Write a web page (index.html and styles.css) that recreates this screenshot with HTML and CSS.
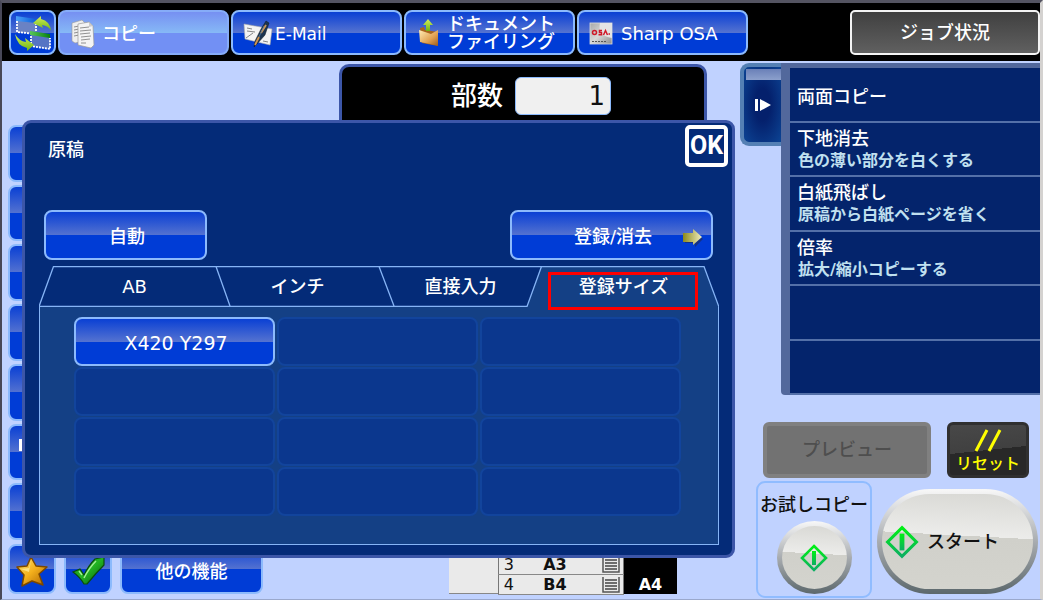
FILE: index.html
```html
<!DOCTYPE html>
<html lang="ja">
<head>
<meta charset="utf-8">
<title>コピー</title>
<link rel="stylesheet" href="styles.css">
</head>
<body>
<svg class="defs" aria-hidden="true">
  <defs>
    <linearGradient id="gold" x1="0" y1="0" x2="1" y2="1"><stop offset="0" stop-color="#ffe878"/><stop offset=".5" stop-color="#f4b01c"/><stop offset="1" stop-color="#a86000"/></linearGradient>
    <linearGradient id="green" x1="0" y1="0" x2="1" y2="1"><stop offset="0" stop-color="#1d8a1c"/><stop offset=".5" stop-color="#22b422"/><stop offset="1" stop-color="#0a5c0e"/></linearGradient>
    <linearGradient id="lime" x1="0" y1="0" x2="0" y2="1"><stop offset="0" stop-color="#d4f05a"/><stop offset="1" stop-color="#6cb414"/></linearGradient>
    <linearGradient id="folder" x1="0" y1="0" x2="1" y2="1"><stop offset="0" stop-color="#ffeeb8"/><stop offset=".6" stop-color="#e0a050"/><stop offset="1" stop-color="#9a5a1c"/></linearGradient>
    <linearGradient id="olive" x1="0" y1="0" x2="1" y2="0"><stop offset="0" stop-color="#8c8a1c"/><stop offset="1" stop-color="#f0eec0"/></linearGradient>
    <linearGradient id="silver" x1="0" y1="0" x2="1" y2="1"><stop offset="0" stop-color="#a8a8a8"/><stop offset=".5" stop-color="#d8d8d8"/><stop offset="1" stop-color="#8c8c8c"/></linearGradient>
    <linearGradient id="start" x1="0" y1="0" x2="0" y2="1"><stop offset="0" stop-color="#00f014"/><stop offset="1" stop-color="#0cae62"/></linearGradient>
    <linearGradient id="winblue" x1="0" y1="0" x2="1" y2="0"><stop offset="0" stop-color="#4aa0f8"/><stop offset="1" stop-color="#0c5cd8"/></linearGradient>
    <linearGradient id="wingreen" x1="0" y1="0" x2="1" y2="0"><stop offset="0" stop-color="#58c858"/><stop offset="1" stop-color="#088010"/></linearGradient>
  </defs>
</svg>
<div class="screen">
  <header class="modes">
    <button class="btn mode-switch" aria-label="切替">
      <svg width="38" height="38" viewBox="0 0 38 38">
        <path d="M3 3L22 6V20L3 18Z" fill="#6a82c4"/><path d="M2 2L22 5V9L2 7Z" fill="url(#winblue)"/>
        <path d="M3 7V18L22 20V9" fill="none" stroke="#fff" stroke-width="1.800" stroke-dasharray="2 1"/>
        <path d="M17 20L36 22V35L17 32Z" fill="#5674c4"/><path d="M16 17L36 20V24L16 21Z" fill="url(#wingreen)"/>
        <path d="M17 22V32L36 35V24" fill="none" stroke="#fff" stroke-width="1.800" stroke-dasharray="2 1"/>
        <path d="M37 17Q35 12 28 11L29 14L19 9L27 2V5Q36 7 37 17Z" fill="url(#lime)"/>
        <path d="M1 20Q5 27 12 28L11 24L20 31L13 37V34Q3 32 1 20Z" fill="url(#lime)"/>
      </svg>
    </button>
    <button class="btn mode mode-on">
      <svg width="26" height="30" viewBox="0 0 26 30">
        <path d="M2 4L12 1L15 4V22L5 24L2 22Z" fill="#eee" stroke="#999" stroke-width=".6"/>
        <path d="M4 8L9 7M4 11L9 10M4 14L9 13M4 17L9 16" stroke="#777" stroke-width=".8"/>
        <path d="M8 5L19 3L23 7L24 26L21 29L8 26Z" fill="#f4f4f4" stroke="#999" stroke-width=".7"/>
        <path d="M10 9L19 8M10 12L21 11M10 15L20 14M11 18L21 17M11 21L20 20M11 24L16 24" stroke="#777" stroke-width=".8"/>
        <path d="M19 3V8L23 7Z" fill="#ccc"/>
      </svg>
      <span>コピー</span>
    </button>
    <button class="btn mode mail">
      <svg width="30" height="28" viewBox="0 0 30 28">
        <path d="M1 4L29 9L27 25L2 19Z" fill="#f4f4f4" stroke="#aaa" stroke-width=".6"/>
        <path d="M4 8L9 9M4 11L12 12M3 18L10 13M20 21L25 22" stroke="#777" stroke-width=".9"/>
        <path d="M23 1L26 3L22 15L14 24L11 27L12 21L18 9Z" fill="#1c3450" stroke="#101820" stroke-width=".5"/>
        <path d="M23 5L18 13M16 17L12 25" stroke="#d09450" stroke-width="1.800"/>
        <path d="M21 6L16 17" stroke="#5c84a8" stroke-width=".8"/>
      </svg>
      <span>E-Mail</span>
    </button>
    <button class="btn mode filing">
      <svg width="24" height="28" viewBox="0 0 24 28">
        <path d="M3 9L7 8L8 11L21 13V27L5 24Z" fill="#a8641c"/>
        <path d="M11 0L16 6H13V12H9V6H6Z" fill="url(#lime)"/>
        <path d="M2 11L14 15L21 11V27L18 26L3 23Z" fill="url(#folder)"/>
      </svg>
      <span>ドキュメント<br>ファイリング</span>
    </button>
    <button class="btn mode osa">
      <svg width="24" height="24" viewBox="0 0 24 24">
        <rect x="1" y="1" width="22" height="21" fill="url(#silver)" stroke="#ddd" stroke-width=".8"/>
        <path d="M11 1H23V16Q8 14 11 1Z" fill="#e4e4e4"/>
        <g fill="none" stroke="#d01828" stroke-width="1.500"><circle cx="5.500" cy="10.500" r="2"/><path d="M13 8.500H10.500V10.500H12.500V12.800H9.500M14.500 13L16.500 8.500L18.500 13M19.500 12H21"/></g>
        <path d="M3 19.500H18" stroke="#555" stroke-width="1.200" stroke-dasharray="2 1"/>
      </svg>
      <span>Sharp OSA</span>
    </button>
    <button class="job-status">ジョブ状況</button>
  </header>

  <main class="work">
    <section class="left">
      <div class="copies">
        <label for="copies">部数</label>
        <input id="copies" type="text" value="1">
      </div>
      <div class="side" aria-hidden="true">
        <div></div><div></div><div></div><div></div><div></div><div><i></i></div><div></div>
      </div>
      <div class="bottom">
        <button class="btn tool" aria-label="お気に入り">
          <svg width="34" height="32" viewBox="0 0 34 32"><path d="M16 2L21 11L32 12L24 19L28 30L17 26L7 31L9 20L2 12L12 11Z" fill="url(#gold)" stroke="#7c4800" stroke-width="1.500" stroke-linejoin="round"/><path d="M16 5L14 13L6 14L14 17Z" fill="#fff0a0" opacity=".7"/></svg>
        </button>
        <button class="btn tool" aria-label="確認">
          <svg width="34" height="32" viewBox="0 0 34 32"><path d="M2 17L9 14L13 20Q18 10 24 4L33 2V10Q25 18 16 29H13Q9 22 2 17Z" fill="url(#green)" stroke="#0a4c0c" stroke-width="1.200"/><path d="M13 23Q18 13 25 6M8 16L11 20" stroke="#a0f090" stroke-width="1.500" fill="none"/></svg>
        </button>
        <button class="btn other">他の機能</button>
        <div class="trays">
          <div class="tray-blank"></div>
          <table>
            <tr><td class="no">3</td><td class="size">A3</td><td class="stack"><svg width="18" height="16" viewBox="0 0 18 16"><path d="M1 0V15H17V0" fill="none" stroke="#555" stroke-width="1.500"/><path d="M3 3H15M3 6H15M3 9H15M3 12H15" stroke="#444" stroke-width="1.400"/></svg></td></tr>
            <tr><td class="no">4</td><td class="size">B4</td><td class="stack"><svg width="18" height="16" viewBox="0 0 18 16"><path d="M1 0V15H17V0" fill="none" stroke="#555" stroke-width="1.500"/><path d="M3 3H15M3 6H15M3 9H15M3 12H15" stroke="#444" stroke-width="1.400"/></svg></td></tr>
          </table>
          <div class="tray-a4">A4</div>
        </div>
      </div>

      <div class="dialog" role="dialog" aria-labelledby="dialog-title">
        <div class="dialog-head">
          <h1 id="dialog-title">原稿</h1>
          <button class="ok">OK</button>
        </div>
        <div class="dialog-actions">
          <button class="btn auto">自動</button>
          <button class="btn register">登録/消去
            <svg class="arrow" width="22" height="20" viewBox="0 0 22 20"><path d="M3 7H12V3L21 11L13 19V15H3Z" fill="#222850" opacity=".6"/><path d="M1 5H11V1L20 9L11 17V14H1Z" fill="url(#olive)"/></svg>
          </button>
        </div>
        <div class="tabs" role="tablist">
          <svg class="tab-lines" viewBox="0 0 680 41" preserveAspectRatio="none" aria-hidden="true">
            <path d="M488 41L502 .5H665L680 41Z" fill="#144085"/>
            <path d="M0 40.500L14.500 .5H665L680 41M177 .5L191 40M340 .5L355 40M502.500 .5L488 40.500H0" fill="none" stroke="#86b4f6" stroke-width="1.300"/>
          </svg>
          <button role="tab">AB</button>
          <button role="tab">インチ</button>
          <button role="tab">直接入力</button>
          <button role="tab" class="tab-on" aria-selected="true">登録サイズ<span class="mark"></span></button>
        </div>
        <div class="sizes">
          <button class="btn">X420 Y297</button>
          <button disabled></button><button disabled></button><button disabled></button>
          <button disabled></button><button disabled></button><button disabled></button>
          <button disabled></button><button disabled></button><button disabled></button>
          <button disabled></button><button disabled></button>
        </div>
      </div>
    </section>

    <aside class="right">
      <div class="action-panel">
        <button class="handle" aria-label="開閉"><svg width="18" height="14" viewBox="0 0 18 14"><path d="M1 1H4V13H1ZM6 1L17 7L6 13Z" fill="#fff"/></svg></button>
        <ul class="actions">
          <li class="current"><b>両面コピー</b></li>
          <li><b>下地消去</b><span>色の薄い部分を白くする</span></li>
          <li><b>白紙飛ばし</b><span>原稿から白紙ページを省く</span></li>
          <li><b>倍率</b><span>拡大/縮小コピーする</span></li>
          <li></li>
          <li></li>
        </ul>
      </div>
      <div class="row-a">
        <button class="preview" disabled>プレビュー</button>
        <button class="reset">
          <svg width="34" height="27" viewBox="0 0 34 27"><path d="M5 24L16 3M18 24L29 3" stroke="#ff0" stroke-width="3"/></svg>
          <span>リセット</span>
        </button>
      </div>
      <div class="row-b">
        <div class="trial">
          <span id="trial-label">お試しコピー</span>
          <button class="round" aria-labelledby="trial-label"><svg width="28" height="30" viewBox="0 0 28 30"><path d="M14 3L26 15L14 27L2 15Z" fill="none" stroke="url(#start)" stroke-width="2.600"/><path d="M12 8H16V22H12Z" fill="url(#start)"/></svg></button>
        </div>
        <button class="start">
          <svg width="34" height="36" viewBox="0 0 28 30"><path d="M14 3L26 15L14 27L2 15Z" fill="none" stroke="url(#start)" stroke-width="2.600"/><path d="M12 8H16V22H12Z" fill="url(#start)"/></svg>
          <span>スタート</span>
        </button>
      </div>
    </aside>
  </main>
</div>
</body>
</html>
```

FILE: styles.css
```css
* { box-sizing: border-box; }
body {
  margin: 0;
  font: 500 18px/20px "DejaVu Sans", "Noto Sans CJK JP", sans-serif;
  color: #fff;
  background: #c0d2ff;
}
button, input { font: inherit; color: inherit; margin: 0; padding: 0; }
svg { display: block; flex: none; }
.defs { position: absolute; width: 0; height: 0; }

.screen {
  display: flex;
  flex-direction: column;
  min-height: 100vh;
  border-top: 3px solid #545462;
  border-left: 2px solid #484858;
  border-right: 3px solid #d4d2d0;
  border-bottom: 1px solid #9aa8cc;
}

.btn {
  border: 2px solid #8cbafc;
  border-radius: 8px;
  background: linear-gradient(#0a40d4, #5472d0 50%, #003cd6 50%);
}

/* Mode keys */
.modes {
  display: flex;
  gap: 2px;
  padding: 7px 0 6px 7px;
  background: #000;
}
.mode-switch { width: 47px; height: 45px; display: grid; place-items: center; }
.mode {
  display: flex;
  align-items: center;
  gap: 6px;
  width: 171px;
  height: 45px;
  padding: 2px 0 0 10px;
  line-height: 18px;
  text-align: left;
}
.mode-on {
  border-color: #86acf8;
  background: linear-gradient(#7690f2, #86b8f6 50%, #7290f4 50%);
}
.mail { gap: 2px; font-size: 17px; }
.filing { padding: 0 0 0 11px; }
.osa { gap: 8px; }
.job-status {
  width: 190px;
  margin-left: auto;
  border: 2px solid #f4f4f4;
  border-radius: 5px;
  background: linear-gradient(#404040, #606060);
}

.work { display: flex; flex: 1; }
.left {
  position: relative;
  display: flex;
  flex-direction: column;
  flex: 1;
}

.copies {
  display: flex;
  justify-content: center;
  align-items: center;
  gap: 12px;
  height: 60px;
  margin: 3px 33px 0 337px;
  border: 3px solid #3c56a8;
  border-bottom: 0;
  border-radius: 10px 10px 0 0;
  background: #000;
  font-size: 26px;
}
.copies label { padding-left: 16px; }
.copies input {
  width: 96px;
  height: 38px;
  padding-right: 5px;
  border: 1px solid #8cbafc;
  border-radius: 6px;
  background: #f0f0f0;
  color: #111;
  text-align: right;
}

.side {
  display: grid;
  grid-auto-rows: 1fr;
  gap: 3px;
  flex: 1;
  width: 40px;
  margin: 1px 0 4px 6px;
}
.side div {
  border: 2px solid #8cbafc;
  border-radius: 8px;
  background: linear-gradient(#0a40d4, #5472d0 50%, #003cd6 50%);
}
.side i { display: block; width: 4px; height: 12px; margin: 13px 0 0 9px; background: #fff; }

.bottom {
  display: flex;
  gap: 8px;
  align-items: flex-end;
  padding: 0 63px 5px 6px;
}
.tool { display: grid; place-items: center; width: 48px; height: 50px; }
.tool svg { margin-top: 4px; }
.other { width: 143px; height: 50px; padding-top: 6px; }
.trays { display: flex; width: 228px; height: 40px; margin-left: auto; color: #111; background: #eaeaea; }
.tray-blank { flex: 1; border-bottom: 1px solid #888; }
.trays table {
  width: 126px;
  table-layout: fixed;
  border-collapse: collapse;
  border: 1px solid #777;
  font-size: 16px;
}
.trays td { height: 20px; padding: 0; border-bottom: 1px solid #888; line-height: 18px; text-align: center; }
.trays .no { width: 20px; }
.trays .size { padding-right: 10px; font-weight: bold; }
.trays .stack { width: 22px; }
.tray-a4 { width: 53px; padding-top: 21px; background: #000; color: #fff; font-size: 16px; font-weight: bold; text-align: center; }

/* Original size dialog */
.dialog {
  position: absolute;
  top: 59px;
  left: 20px;
  right: 5px;
  padding-bottom: 10px;
  border: 3px solid #3c56a8;
  border-radius: 9px;
  background: #042b78;
}
.dialog-head { display: flex; justify-content: space-between; padding: 2px 4px 0 23px; }
.dialog-head h1 { margin: 15px 0 0; font-size: 18px; font-weight: 500; }
.ok {
  width: 43px;
  height: 42px;
  border: 4px solid #fff;
  border-radius: 5px;
  background: #042b78;
  font: bold 25px/34px Roboto, sans-serif;
}
.dialog-actions { display: flex; justify-content: space-between; padding: 43px 19px 0; }
.dialog-actions .btn { height: 50px; padding: 4px 0 0 3px; }
.auto { width: 163px; }
.register { position: relative; width: 203px; }
.arrow { position: absolute; right: 7px; top: 16px; }

.tabs {
  position: relative;
  display: grid;
  grid-template-columns: repeat(4, 1fr);
  height: 40px;
  margin: 6px 13px 0 14px;
  padding: 0 14px;
}
.tab-lines { position: absolute; left: 0; top: 0; width: 100%; height: 41px; }
.tabs button { position: relative; border: 0; padding: 2px 0 0; background: none; }
.mark { position: absolute; top: 6px; left: 6px; right: 7px; height: 38px; border: 3px solid #f00; z-index: 1; }

.sizes {
  display: grid;
  grid-template-columns: repeat(3, 1fr);
  grid-auto-rows: 49px;
  gap: 1px 2px;
  margin: 0 13px 0 14px;
  padding: 11px 37px 28px 34px;
  border: 1px solid #86b4f6;
  border-top: 0;
  background: #144085;
}
.sizes .btn { padding: 3px 0 0 3px; font-size: 19px; }
.sizes button:disabled { border: 2px solid #12449c; border-radius: 8px; background: #0b378e; }

/* Action panel */
.right { width: 300px; }
.action-panel { display: flex; align-items: flex-start; padding-top: 2px; }
.handle {
  display: grid;
  place-items: center;
  width: 41px;
  height: 83px;
  border: 4px solid #5480b4;
  border-right: 0;
  border-radius: 9px 0 0 9px;
  background: linear-gradient(#6a80b8, #8ca0cc) 2px 2px / 100% 11px no-repeat, radial-gradient(#04206c 30%, #0c4494);
}
.actions {
  display: grid;
  grid-auto-rows: 1fr;
  flex: 1;
  min-height: 332px;
  margin: 0;
  padding: 4px 0 0;
  border-left: 9px solid #52689c;
  border-top: 1px solid #52689c;
  border-radius: 0 0 0 4px;
  background: linear-gradient(#52689c 4px, #04246c 4px);
  list-style: none;
}
.actions li {
  display: flex;
  flex-direction: column;
  justify-content: center;
  gap: 2px;
  padding: 2px 0 0 7px;
  border-bottom: 2px solid #5470a8;
}
.actions .current { padding-top: 6px; }
.actions b { font-weight: 500; }
.actions span { padding-left: 1px; font-size: 16px; font-weight: bold; color: #c0e0f0; }

/* Preview, reset and start keys */
.row-a { display: flex; gap: 16px; padding: 27px 11px 0 23px; }
.preview {
  flex: 1;
  height: 56px;
  border: 4px solid #808080;
  border-radius: 6px;
  background: #727272;
  color: #4e4e4e;
}
.reset {
  display: flex;
  flex-direction: column;
  align-items: center;
  width: 82px;
  height: 56px;
  padding-top: 2px;
  border: 3px solid #303030;
  border-radius: 6px;
  background: linear-gradient(174deg, #484848, #404040 50%, #282828 50%);
  color: #ff0;
  font-size: 16px;
}
.row-b { display: flex; gap: 5px; padding: 3px 2px 0 16px; color: #111; }
.trial {
  display: flex;
  flex-direction: column;
  align-items: center;
  gap: 6px;
  width: 116px;
  height: 117px;
  padding-top: 12px;
  border: 2px solid #90bcff;
  border-radius: 9px;
  white-space: nowrap;
}
.round, .start {
  border: 5px solid transparent;
  background:
    linear-gradient(3deg, #d4d4ce, #d0d0ca 56%, #ececea 56%, #d8d8d4) padding-box,
    linear-gradient(#f8f8f8, #a8acb0 50%, #5c686c) border-box;
}
.round { display: grid; place-items: center; width: 75px; height: 73px; flex: none; border-radius: 50%; }
.start {
  display: flex;
  align-items: center;
  gap: 8px;
  flex: 1;
  height: 105px;
  margin-top: 8px;
  padding-left: 3px;
  border-radius: 53px;
}
```
